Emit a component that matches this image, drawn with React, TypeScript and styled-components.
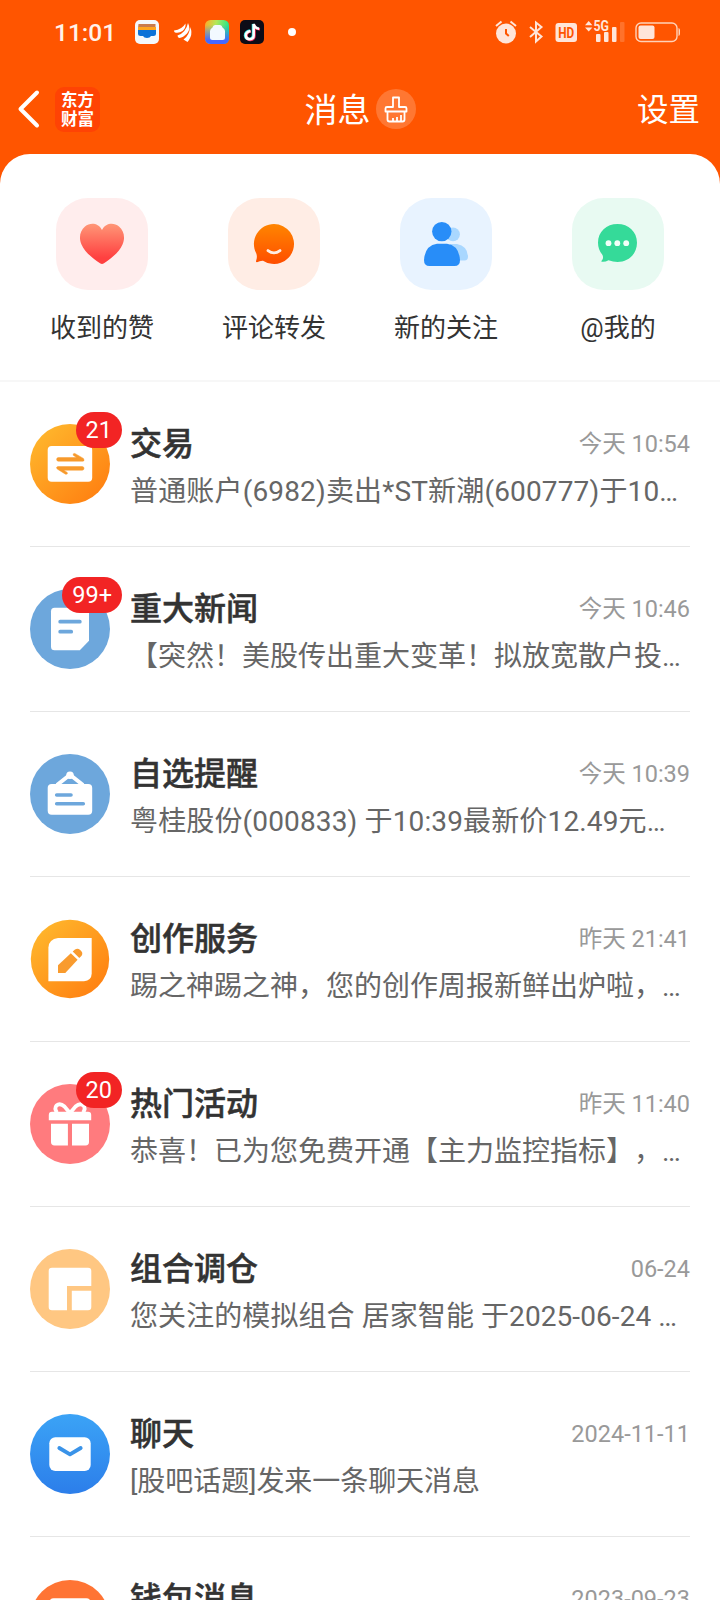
import React from "react";
import styled, { createGlobalStyle } from "styled-components";

const GlobalStyle = createGlobalStyle`
  * { box-sizing: border-box; }
  body {
    margin: 0;
    background: #fff;
    font-family: Roboto, "Noto Sans CJK SC", sans-serif;
    text-spacing-trim: space-all;
  }
`;

const Screen = styled.div`
  width: 720px;
  height: 1600px;
  overflow: hidden;
  display: flex;
  flex-direction: column;
  background: #ff5500;
`;

const StatusBar = styled.div`
  display: flex;
  align-items: center;
  justify-content: space-between;
  height: 64px;
  padding: 0 39px 0 54px;
  flex-shrink: 0;
`;

const StatusGroup = styled.div`
  display: flex;
  align-items: center;
`;

const Clock = styled.span`
  width: 81px;
  padding-top: 2px;
  font-size: 24.5px;
  line-height: 30px;
  font-weight: 500;
  color: #fff3ea;
  white-space: nowrap;
`;

const StatusIcon = styled.svg<{ $gap?: number }>`
  display: block;
  flex-shrink: 0;
  overflow: visible;
  margin-left: ${(p) => p.$gap ?? 0}px;
`;

const NavBar = styled.header`
  display: grid;
  grid-template-columns: 1fr auto 1fr;
  align-items: center;
  height: 90px;
  padding: 0 20px 0 17px;
  flex-shrink: 0;
  color: #fff;
`;

const NavLeft = styled.div`
  display: flex;
  align-items: center;
  gap: 15px;
`;

const BrandLogo = styled.div`
  display: flex;
  flex-direction: column;
  align-items: center;
  justify-content: center;
  width: 45px;
  height: 45px;
  border-radius: 9px;
  background: #ff4304;
  font-family: "Noto Sans CJK SC", sans-serif;
  font-weight: 700;
  font-size: 16.5px;
  line-height: 19px;
`;

const NavTitle = styled.h1`
  display: flex;
  align-items: center;
  gap: 5px;
  margin: 0;
  padding-left: 3px;
  font-size: 33px;
  line-height: 44px;
  font-weight: 400;
`;

const NavTitleText = styled.span`
  padding-top: 4px;
`;

const CleanButton = styled.span`
  display: flex;
  width: 40px;
  height: 40px;
  border-radius: 50%;
  background: #ff7732;
`;

const NavAction = styled.span`
  justify-self: end;
  padding-top: 4px;
  font-size: 31.5px;
  line-height: 44px;
`;

const Sheet = styled.main`
  flex: 1;
  min-height: 0;
  background: #fff;
  border-radius: 30px 30px 0 0;
  overflow: hidden;
`;

const Shortcuts = styled.nav`
  display: grid;
  grid-template-columns: repeat(4, 172px);
  height: 228px;
  padding: 44px 16px 0;
  border-bottom: 2px solid #f7f7f7;
`;

const Shortcut = styled.div`
  display: flex;
  flex-direction: column;
  align-items: center;
  gap: 18px;
`;

const ShortcutTile = styled.span<{ $tint: string }>`
  display: flex;
  width: 92px;
  height: 92px;
  border-radius: 32px;
  background: ${(p) => p.$tint};
`;

const ShortcutLabel = styled.span`
  font-size: 26px;
  line-height: 40px;
  color: #333;
`;

const MessageList = styled.section`
  padding: 0 30px;
`;

const MessageRow = styled.article`
  display: flex;
  gap: 20px;
  height: 165px;
  padding-top: 42px;
  border-bottom: 1px solid #e6e6e6;
`;

const Avatar = styled.div`
  position: relative;
  width: 80px;
  height: 80px;
  flex-shrink: 0;
`;

const Badge = styled.span`
  position: absolute;
  top: -12px;
  right: -12px;
  height: 36px;
  padding: 0 10px;
  border-radius: 18px;
  background: #f22424;
  color: #fff;
  font-size: 23.5px;
  line-height: 36px;
  white-space: nowrap;
`;

const MessageBody = styled.div`
  flex: 1;
  min-width: 0;
  display: flex;
  flex-direction: column;
  gap: 8px;
`;

const MessageHead = styled.div`
  display: flex;
  align-items: center;
  justify-content: space-between;
  height: 40px;
`;

const MessageTitle = styled.h2`
  margin: 0;
  font-size: 32px;
  line-height: 40px;
  font-weight: 500;
  color: #333;
  -webkit-text-stroke: 0.5px #333;
`;

const MessageTime = styled.time`
  font-size: 23.5px;
  line-height: 40px;
  color: #999;
`;

const Preview = styled.p<{ $spacing?: number }>`
  margin: 0;
  font-size: 28px;
  line-height: 40px;
  color: #666;
  white-space: nowrap;
  letter-spacing: ${(p) => p.$spacing ?? 0}px;
`;

function Icon80({ children }: { children: React.ReactNode }) {
  return (
    <svg width="80" height="80" viewBox="0 0 80 80" fill="#fff" display="block">
      <defs>
        <linearGradient id="amber" x1="0.1" y1="0.1" x2="0.85" y2="0.9">
          <stop offset="0" stopColor="#ffb62c" />
          <stop offset="1" stopColor="#ff8212" />
        </linearGradient>
        <linearGradient id="azure" x1="0" y1="0" x2="0" y2="1">
          <stop offset="0" stopColor="#3ba3f6" />
          <stop offset="1" stopColor="#2c7eea" />
        </linearGradient>
      </defs>
      {children}
    </svg>
  );
}

const TradeIcon = () => (
  <Icon80>
    <circle cx="40" cy="40" r="40" fill="url(#amber)" />
    <rect x="17.7" y="22" width="44.5" height="35.8" rx="4" />
    <path
      fill="#f79a2c"
      stroke="#f79a2c"
      strokeWidth="0.5"
      d="M28.3 33.6H46.5L43.2 31.2Q42.6 29.2 44.8 29.4L53.4 34.4Q55 37 53 37.2H28.3Q26.6 37 26.6 35.4Q26.6 33.6 28.3 33.6ZM52.3 42.6H28Q25.6 43 27.2 45L35.5 50.2Q38.2 50.4 37.2 48.4L33.8 46.2H52.3Q54 46 54 44.4Q54 42.6 52.3 42.6Z"
    />
  </Icon80>
);

const NewsIcon = () => (
  <Icon80>
    <circle cx="40" cy="40" r="40" fill="#6da7dc" />
    <path d="M24.5 18.8H55.5Q59 18.8 59 22.3V51.8L49.8 61.2H24.5Q21 61.2 21 57.7V22.3Q21 18.8 24.5 18.8Z" />
    <path d="M30.2 32.7H49.8M30.2 42.7H41.2" stroke="#6da7dc" strokeWidth="3.8" strokeLinecap="round" />
  </Icon80>
);

const WatchIcon = () => (
  <Icon80>
    <circle cx="40" cy="40" r="40" fill="#6da7dc" />
    <rect x="17.7" y="30" width="44.5" height="30.8" rx="4" />
    <path d="M27 31L40 20.8L53 31" fill="none" stroke="#fff" strokeWidth="4" />
    <circle cx="40" cy="21.2" r="3.8" />
    <path d="M26.7 41H41M26.7 49.8H53.3" stroke="#6da7dc" strokeWidth="3.6" strokeLinecap="round" />
  </Icon80>
);

const CreateIcon = () => (
  <Icon80>
    <circle cx="40" cy="40" r="39.2" fill="url(#amber)" />
    <path d="M28 19H61.7V54.5Q61.5 61.5 54 62.3H18.4V28.5Q19 20 28 19Z" />
    <path d="M28 46.2L40.8 34.2L47.6 40.8L35.3 53.9H28Z" fill="#f99b2e" />
    <path d="M42.7 32.4L45 30.5Q47.7 28.6 50.2 31Q53.6 33.8 51.6 36.8L49.3 39Z" fill="#f99b2e" />
  </Icon80>
);

const GiftIcon = () => (
  <Icon80>
    <circle cx="40" cy="40" r="40" fill="#ff7b7e" />
    <path d="M22 27.7H58Q61.2 27.7 61.2 31V36.2H18.8V31Q18.8 27.7 22 27.7Z" />
    <path d="M21 39.8H37.9V61.4H24.5Q21 61.4 21 58ZM42 39.8H59V58Q59 61.4 55.5 61.4H42Z" />
    <path
      d="M39.5 28.500L34.500 22.500Q30 18.500 26.500 21.500Q24 24.500 27 28.500M40.500 28.500L45.500 22.500Q50 18.500 53.500 21.500Q56 24.500 53 28.500"
      fill="none"
      stroke="#fff"
      strokeWidth="3.8"
    />
  </Icon80>
);

const PortfolioIcon = () => (
  <Icon80>
    <circle cx="40" cy="40" r="40" fill="#ffc782" />
    <path d="M22 18.7H58Q61.3 18.7 61.3 22V36.9H37V61.3H22Q18.7 61.3 18.7 58V22Q18.7 18.7 22 18.7Z" />
    <path d="M41.8 41.7H61.3V58Q61.3 61.3 58 61.3H41.8Z" />
  </Icon80>
);

const ChatIcon = () => (
  <Icon80>
    <circle cx="40" cy="40" r="40" fill="url(#azure)" />
    <rect x="19.3" y="23.3" width="41.4" height="33.6" rx="6" />
    <path d="M29.3 34L40 40.4L50.7 34" fill="none" stroke="#3a93e8" strokeWidth="3.8" strokeLinecap="round" strokeLinejoin="round" />
  </Icon80>
);

const WalletIcon = () => (
  <Icon80>
    <circle cx="40" cy="40.5" r="39.6" fill="#ff7434" />
    <rect x="18.7" y="19.2" width="42.6" height="36" rx="5" />
  </Icon80>
);

const messages = [
  { icon: <TradeIcon />, badge: "21", title: "交易", time: "今天 10:54", text: "普通账户(6982)卖出*ST新潮(600777)于10…", spacing: 0.16 },
  { icon: <NewsIcon />, badge: "99+", title: "重大新闻", time: "今天 10:46", text: "【突然！美股传出重大变革！拟放宽散户投…" },
  { icon: <WatchIcon />, title: "自选提醒", time: "今天 10:39", text: "粤桂股份(000833) 于10:39最新价12.49元…", spacing: 0.14 },
  { icon: <CreateIcon />, title: "创作服务", time: "昨天 21:41", text: "踢之神踢之神，您的创作周报新鲜出炉啦，…" },
  { icon: <GiftIcon />, badge: "20", title: "热门活动", time: "昨天 11:40", text: "恭喜！已为您免费开通【主力监控指标】，…" },
  { icon: <PortfolioIcon />, title: "组合调仓", time: "06-24", text: "您关注的模拟组合 居家智能 于2025-06-24 …", spacing: 0.08 },
  { icon: <ChatIcon />, title: "聊天", time: "2024-11-11", text: "[股吧话题]发来一条聊天消息", spacing: -0.07 },
  { icon: <WalletIcon />, title: "钱包消息", time: "2023-09-23", text: "" },
];

const shortcuts = [
  {
    label: "收到的赞",
    tint: "#ffeded",
    art: (
      <>
        <defs>
          <linearGradient id="heart" x1="0" y1="0" x2="0" y2="1">
            <stop offset="0" stopColor="#ff9677" />
            <stop offset="0.85" stopColor="#ff4040" />
          </linearGradient>
        </defs>
        <path fill="url(#heart)" d="M46 32C42 24.5 34 24.5 29 28.5C24 32.5 22.5 40 25.5 46.5C29 54.5 37 60.5 44 65.3Q46 66.5 48 65.3C55 60.5 63 54.5 66.5 46.5C69.5 40 68 32.5 63 28.5C58 24.5 50 24.5 46 32Z" />
      </>
    ),
  },
  {
    label: "评论转发",
    tint: "#ffede5",
    art: (
      <>
        <defs>
          <linearGradient id="smile" x1="0" y1="0" x2="0" y2="1">
            <stop offset="0" stopColor="#ff8500" />
            <stop offset="1" stopColor="#ff4e00" />
          </linearGradient>
        </defs>
        <path fill="url(#smile)" d="M46 26A20 20 0 1 1 35 62.7Q32 62.5 29 64.2Q27.5 64.2 28.2 62.5Q29.5 59 28.3 55.5A20 20 0 0 1 46 26Z" />
        <path d="M40 52.6Q46 57.2 52 52.6" fill="none" stroke="#ffede5" strokeWidth="2.8" strokeLinecap="round" />
      </>
    ),
  },
  {
    label: "新的关注",
    tint: "#e8f3ff",
    art: (
      <>
        <g fill="#a9d7ff">
          <circle cx="53" cy="36.3" r="6.9" />
          <path d="M50 46H57Q67.5 48 68 58.5Q68 62.4 64.5 62.4H50Z" />
        </g>
        <circle cx="41.8" cy="33.6" r="9.7" fill="#288df8" />
        <path d="M37 45.8H47Q59 47.5 60 62Q60 68 54.5 68H29.5Q24 68 24 62Q25 47.5 37 45.8Z" fill="#288df8" />
      </>
    ),
  },
  {
    label: "@我的",
    tint: "#e8faf2",
    art: (
      <>
        <path fill="#35da99" d="M45.5 26C56.500 26 65 33.5 65 44.8C65 56 56.5 64 45.5 64Q41 64 36.5 62.3Q33 64.3 29.5 63.7Q29.2 63 30 62.3Q31.8 60 30.5 57Q26 52 26 44.8C26 33.5 34.5 26 45.5 26Z" />
        <g fill="#f2fff9">
          <circle cx="36.5" cy="45.2" r="2.9" />
          <circle cx="45.3" cy="45.2" r="2.9" />
          <circle cx="54.2" cy="45.2" r="2.9" />
        </g>
      </>
    ),
  },
];

export default function App() {
  return (
    <Screen>
      <GlobalStyle />
      <StatusBar>
        <StatusGroup>
          <Clock>11:01</Clock>
          <StatusIcon width="24" height="24" viewBox="0 0 24 24">
            <rect width="24" height="24" rx="5" fill="#f4f8fc" />
            <path d="M3.5 4H20.5V8H3Z" fill="#c97b4c" />
            <rect x="3" y="7" width="18" height="4" fill="#ffa51f" />
            <path d="M3 10H21V14Q21 16 18.5 16H16Q15 18 12 18Q9 18 8 16H5.5Q3 16 3 14Z" fill="#0b71d8" />
          </StatusIcon>
          <StatusIcon $gap={14} width="20" height="24" viewBox="0 0 20 24" fill="#fff">
            <path d="M1 10.5Q9 9.500 12.500 3.500Q13 8 9.500 11Q6 13.500 2 12.500Q1 12 1 10.500Z" />
            <path d="M4.500 15.500Q13 12.500 15 3Q18 9 14 13.500Q10 17.500 6.500 18Q4.500 17.500 4.500 15.500Z" />
            <path d="M10.500 19.500Q16.500 15.500 17 7Q19.500 12 17.500 17Q16 20.500 14.500 22Q12.500 20.500 10.500 19.500Z" />
          </StatusIcon>
          <StatusIcon $gap={12} width="24" height="24" viewBox="0 0 24 24">
            <defs>
              <linearGradient id="rainbow" x1="0" y1="0.1" x2="1" y2="0.3">
                <stop offset="0" stopColor="#ffab28" />
                <stop offset="0.45" stopColor="#b2e85a" />
                <stop offset="1" stopColor="#1ee58b" />
              </linearGradient>
              <linearGradient id="rainbowFade" x1="0" y1="0" x2="0" y2="1">
                <stop offset="0.2" stopColor="#397bff" stopOpacity="0" />
                <stop offset="0.85" stopColor="#4567ff" />
              </linearGradient>
            </defs>
            <rect width="24" height="24" rx="5.5" fill="url(#rainbow)" />
            <rect width="24" height="24" rx="5.5" fill="url(#rainbowFade)" />
            <path d="M10 5H15Q17 5 17.500 7.500Q20 9 20 11V17.500Q20 20 17.500 20H7.500Q5 20 5 17.500V11Q5 9 7.500 7.500Q8 5 10 5Z" fill="#f2f9ff" />
          </StatusIcon>
          <StatusIcon $gap={11} width="24" height="24" viewBox="0 0 24 24" fill="none">
            <rect width="24" height="24" rx="5" fill="#0d0c17" />
            <g strokeWidth="2.5">
              <path d="M10 10.5Q5 11.5 5 15.5Q5.5 19 9 19Q13 18.5 13 15V4Q14 8 18.5 8.3" stroke="#27e5e5" />
              <path d="M11 11.5Q6.5 12 6.5 16Q7 20 10.5 20Q14.5 19.5 14.5 16V5Q15.5 9 20 9.3" stroke="#f22b58" />
              <path d="M10.5 11Q5.8 11.8 5.8 15.5Q6.2 19.3 9.7 19.3Q13.7 19 13.7 15.5V4Q15 8.5 19.2 8.7" stroke="#fff" />
            </g>
          </StatusIcon>
          <StatusIcon $gap={24} width="8" height="8" viewBox="0 0 8 8">
            <circle cx="4" cy="4" r="4" fill="#fff" />
          </StatusIcon>
        </StatusGroup>
        <StatusGroup>
          <StatusIcon width="22" height="24" viewBox="0 0 22 24" fill="none">
            <circle cx="11" cy="13.5" r="10" fill="#ffe5d9" />
            <path d="M1 6L6.5 1.5M15.5 1.5L21 6" stroke="#ffe5d9" strokeWidth="2" />
            <path d="M11 9V13.5L13.8 16" stroke="#ff5500" strokeWidth="2" />
          </StatusIcon>
          <StatusIcon $gap={11} width="16" height="24" viewBox="0 0 16 24" fill="none">
            <path d="M2 7L13.5 16.5L8 21.5V2.5L13.5 7L2 17" stroke="#ffe5d9" strokeWidth="2" />
          </StatusIcon>
          <StatusIcon $gap={11} width="22" height="24" viewBox="0 0 22 24">
            <rect x="0.5" y="3" width="21.5" height="19" rx="3" fill="#ffe5d9" />
            <text x="11.2" y="17.8" fill="#ff5500" fontFamily="Roboto" fontWeight="700" fontSize="14.5" textAnchor="middle" textLength="16" lengthAdjust="spacingAndGlyphs">
              HD
            </text>
          </StatusIcon>
          <StatusIcon $gap={8} width="41" height="24" viewBox="0 0 41 24" fill="#ffe5d9">
            <path d="M0 5.3L3.7 1L7.4 5.3ZM0 7.5L3.7 11.5L7.4 7.5Z" />
            <text x="8.5" y="11.2" fontFamily="Roboto" fontWeight="700" fontSize="13.8" textLength="15.5" lengthAdjust="spacingAndGlyphs">
              5G
            </text>
            <rect x="11" y="14" width="4.5" height="8" rx="1" />
            <rect x="19" y="12" width="4.5" height="10" rx="1" />
            <rect x="27" y="7" width="4.5" height="15" rx="1" />
            <rect x="35" y="2" width="4.5" height="20" rx="1" opacity="0.2" />
          </StatusIcon>
          <StatusIcon $gap={9} width="46" height="24" viewBox="0 0 46 24" fill="none">
            <rect x="1" y="3" width="41" height="18.5" rx="5" stroke="#ffd2b8" strokeWidth="1.4" />
            <rect x="3.5" y="5.5" width="16" height="13.5" rx="2" fill="#ffe5d9" />
            <path d="M43.5 8Q45 8.5 45 10V14Q45 15.5 43.5 16Z" fill="#ffd2b8" />
          </StatusIcon>
        </StatusGroup>
      </StatusBar>
      <NavBar>
        <NavLeft>
          <svg width="23" height="40" viewBox="0 0 23 40" fill="none">
            <path d="M20 3.5L3.5 20L20 36.5" stroke="#fff" strokeWidth="4" strokeLinecap="round" strokeLinejoin="round" />
          </svg>
          <BrandLogo>
            <span>东方</span>
            <span>财富</span>
          </BrandLogo>
        </NavLeft>
        <NavTitle>
          <NavTitleText>消息</NavTitleText>
          <CleanButton>
            <svg width="40" height="40" viewBox="0 0 40 40" fill="none" stroke="#fff" strokeWidth="1.8" strokeLinejoin="round">
              <path d="M17 8.5H23V18H29Q30.5 18 30.5 19.5V22.5H9.5V19.5Q9.5 18 11 18H17ZM11.5 23V30.5Q11.5 32.5 13.5 32.5H26.5Q28.5 32.5 28.5 30.5V23M17 29V32M21 28V32M25 26V32" />
            </svg>
          </CleanButton>
        </NavTitle>
        <NavAction>设置</NavAction>
      </NavBar>
      <Sheet>
        <Shortcuts>
          {shortcuts.map((s) => (
            <Shortcut key={s.label}>
              <ShortcutTile $tint={s.tint}>
                <svg width="92" height="92" viewBox="0 0 92 92">
                  {s.art}
                </svg>
              </ShortcutTile>
              <ShortcutLabel>{s.label}</ShortcutLabel>
            </Shortcut>
          ))}
        </Shortcuts>
        <MessageList>
          {messages.map((m) => (
            <MessageRow key={m.title}>
              <Avatar>
                {m.icon}
                {m.badge && <Badge>{m.badge}</Badge>}
              </Avatar>
              <MessageBody>
                <MessageHead>
                  <MessageTitle>{m.title}</MessageTitle>
                  <MessageTime>{m.time}</MessageTime>
                </MessageHead>
                {m.text && <Preview $spacing={m.spacing}>{m.text}</Preview>}
              </MessageBody>
            </MessageRow>
          ))}
        </MessageList>
      </Sheet>
    </Screen>
  );
}
